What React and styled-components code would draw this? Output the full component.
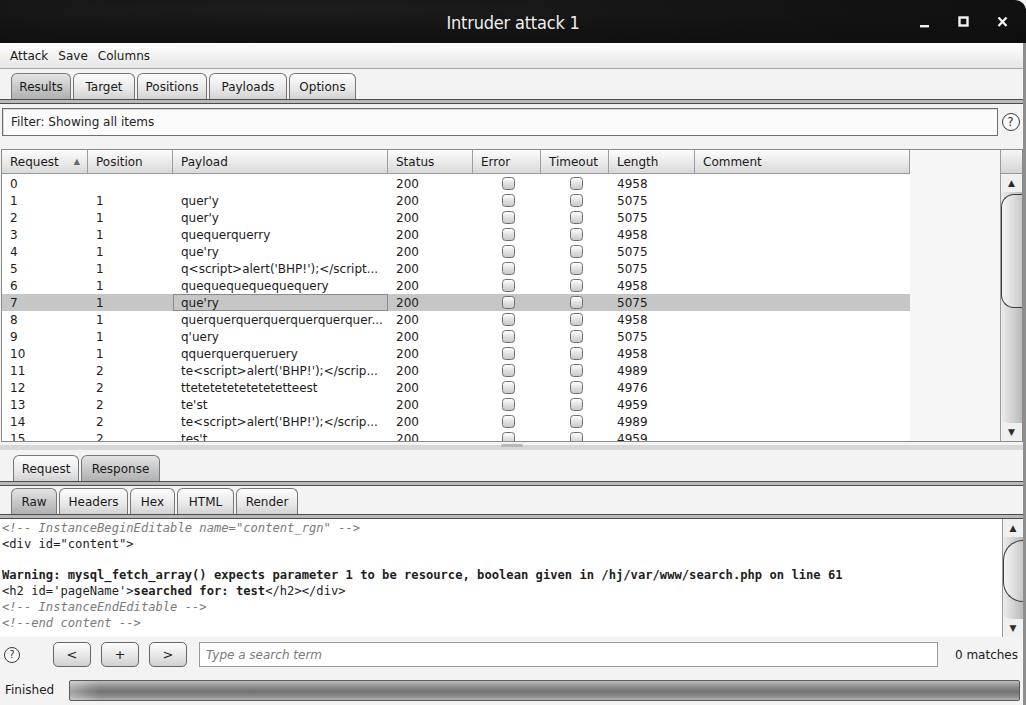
import React from 'react';
import styled, { createGlobalStyle } from 'styled-components';

const Global = createGlobalStyle`
  html, body { margin: 0; padding: 0; background: #f3f3f3; }
  body { font-family: "DejaVu Sans", "Liberation Sans", sans-serif; font-size: 12px; color: #1e1e1e; }
  * { box-sizing: border-box; }
`;

const Window = styled.div`
  width: 1026px;
  height: 705px;
  display: flex;
  flex-direction: column;
  overflow: hidden;
  background: #f3f3f3;
`;

const TitleBar = styled.div`
  height: 43px;
  flex: none;
  display: grid;
  grid-template-columns: 1fr auto 1fr;
  align-items: center;
  background: radial-gradient(ellipse at 30% 20%, #1d1d1d 0%, #121212 55%, #0e0e0e 100%);
  border-top-right-radius: 11px;
  color: #f0f0f0;
`;

const Title = styled.div`
  grid-column: 2;
  font-family: "DejaVu Sans Condensed", "DejaVu Sans", sans-serif;
  font-stretch: condensed;
  font-size: 18px;
  letter-spacing: -0.2px;
  padding-top: 1px;
`;

const Controls = styled.div`
  grid-column: 3;
  justify-self: end;
  display: flex;
  align-items: center;
  gap: 28px;
  padding-right: 18px;
`;

const Body = styled.div`
  flex: 1;
  display: flex;
  flex-direction: column;
  border-right: 3px solid #8e8e8e;
  min-height: 0;
`;

const MenuBar = styled.div`
  height: 26px;
  flex: none;
  display: flex;
  align-items: center;
  gap: 10px;
  padding-left: 10px;
  background: linear-gradient(#fefefe, #e6e6e6);
  border-bottom: 1px solid #a6a6a6;
`;

const MenuItem = styled.span`
  font-size: 12px;
  color: #1a1a1a;
`;

const TabBar = styled.div`
  flex: none;
  display: flex;
  align-items: flex-end;
  gap: 2px;
  padding: ${p => p.$top}px 0 0 ${p => p.$left}px;
`;

const Tab = styled.div`
  height: 26px;
  width: ${p => p.$w}px;
  display: flex;
  align-items: center;
  justify-content: center;
  border: 1px solid #777;
  border-bottom: none;
  border-radius: 6px 6px 0 0;
  background: ${p => (p.$active
    ? 'linear-gradient(#e4e4e4, #c4c4c4 60%, #b0b0b0)'
    : 'linear-gradient(#fdfdfd, #e8e8e8 60%, #d2d2d2)')};
  font-size: 12px;
  color: #1a1a1a;
`;

const Rule = styled.div`
  flex: none;
  height: 5px;
  background: linear-gradient(#4c4c4c 0 1px, #b9b9b9 1px 4px, #4c4c4c 4px);
`;

const FilterRow = styled.div`
  flex: none;
  display: flex;
  align-items: center;
  padding: 4px 0 0 2px;
  margin-bottom: 13px;
`;

const FilterBox = styled.div`
  flex: 1;
  height: 28px;
  display: flex;
  align-items: center;
  padding-left: 8px;
  border: 1px solid #6f6f6f;
  background: #fbfbfb;
  box-shadow: inset 1px 1px 0 #d8d8d8;
`;

const HelpSlot = styled.div`
  width: 25px;
  display: flex;
  justify-content: center;
`;

const Help = styled.span`
  width: ${p => p.$size}px;
  height: ${p => p.$size}px;
  border: 1.3px solid #3b3b3b;
  border-radius: 50%;
  display: flex;
  align-items: center;
  justify-content: center;
  font-size: ${p => p.$size - 6}px;
  line-height: 1;
  color: #333;
  background: #fafafa;
`;

const Table = styled.div`
  flex: none;
  height: 293px;
  margin-left: 1px;
  display: flex;
  border: 1px solid #8a8a8a;
  background: #f6f6f6;
`;

const TableMain = styled.div`
  flex: 1;
  display: flex;
  flex-direction: column;
  min-width: 0;
`;

const HeaderRow = styled.div`
  display: grid;
  grid-template-columns: ${p => p.$cols};
  width: max-content;
  height: 24px;
  flex: none;
`;

const HeaderCell = styled.div`
  display: flex;
  align-items: center;
  justify-content: space-between;
  padding: 0 7px 0 8px;
  background: linear-gradient(#fcfcfc, #e9e9e9 55%, #d9d9d9);
  border-right: 1px solid #9d9d9d;
  border-bottom: 1px solid #9d9d9d;
  font-size: 12px;
  color: #1a1a1a;
`;

const SortArrow = styled.span`
  font-size: 8px;
  color: #666;
`;

const Rows = styled.div`
  flex: 1;
  overflow: hidden;
  padding-top: 1px;
`;

const Row = styled.div`
  display: grid;
  grid-template-columns: ${p => p.$cols};
  width: max-content;
  height: 17px;
  background: ${p => (p.$selected ? '#c6c6c6' : '#ffffff')};
`;

const Cell = styled.div`
  display: flex;
  align-items: center;
  justify-content: ${p => (p.$center ? 'center' : 'flex-start')};
  padding-left: ${p => (p.$center ? 0 : 7)}px;
  white-space: nowrap;
  overflow: hidden;
  font-size: 12px;
  color: #1c1c1c;
  border: 1px solid ${p => (p.$focus ? '#8a8a8a' : 'transparent')};
`;

const Check = styled.span`
  width: 13px;
  height: 13px;
  border: 1px solid #6f6f6f;
  border-radius: 3.5px;
  background: linear-gradient(#fefefe, #e2e2e2 50%, #c9c9c9);
  margin-left: ${p => p.$shift}px;
`;

const Scrollbar = styled.div`
  width: ${p => p.$w}px;
  flex: none;
  display: flex;
  flex-direction: column;
  border-left: 1px solid #9a9a9a;
  background: #f0f0f0;
`;

const ScrollCorner = styled.div`
  height: 24px;
  flex: none;
  background: linear-gradient(#f6f6f6, #d5d5d5);
  border-bottom: 1px solid #9a9a9a;
`;

const ScrollArrow = styled.div`
  height: 18px;
  flex: none;
  display: flex;
  align-items: center;
  justify-content: center;
  font-size: 9px;
  color: #2a2a2a;
`;

const ScrollTrack = styled.div`
  flex: 1;
  display: flex;
  flex-direction: column;
  background: linear-gradient(90deg, #ececec, #cfcfcf 60%, #b9b9b9);
  border-radius: 0 0 0 8px;
`;

const Thumb = styled.div`
  height: ${p => p.$h}px;
  flex: none;
  margin-top: ${p => p.$top}px;
  border: 1.3px solid #3e3e3e;
  border-right: none;
  border-radius: ${p => p.$r}px 0 0 ${p => p.$r}px;
  background: linear-gradient(90deg, #f4f4f4, #dedede 55%, #c6c6c6);
`;

const Divider = styled.div`
  flex: none;
  height: 10px;
  display: flex;
  justify-content: center;
  background: linear-gradient(#f3f3f3 0 3px, #d7d7d7 3px 8px, #f3f3f3 8px);
`;

const Grip = styled.div`
  width: 22px;
  height: 3px;
  margin-top: 2px;
  border-radius: 2px 2px 0 0;
  background: #b8b8b8;
`;

const Editor = styled.div`
  flex: none;
  height: 118px;
  display: flex;
  background: #ffffff;
`;

const Code = styled.div`
  flex: 1;
  padding: 2px 0 0 2px;
  font-family: "DejaVu Sans Mono", "Liberation Mono", monospace;
  font-size: 12.15px;
  line-height: 15.8px;
  white-space: pre;
  overflow: hidden;
  color: #1e1e1e;
`;

const Line = styled.div`
  height: 15.8px;
  font-style: ${p => (p.$comment ? 'italic' : 'normal')};
  font-weight: ${p => (p.$bold ? 'bold' : 'normal')};
  color: ${p => (p.$comment ? '#7a7a7a' : '#1e1e1e')};
`;

const Strong = styled.span`
  font-weight: bold;
`;

const SearchRow = styled.div`
  flex: none;
  height: 35px;
  display: flex;
  align-items: center;
  padding: 0 5px 0 4px;
`;

const NavButton = styled.div`
  width: 38px;
  height: 25px;
  display: flex;
  align-items: center;
  justify-content: center;
  margin-left: ${p => p.$ml}px;
  border: 1px solid #666;
  border-radius: 5px;
  background: linear-gradient(#fdfdfd, #e6e6e6 55%, #d0d0d0);
  font-size: 13px;
  color: #222;
`;

const SearchField = styled.div`
  flex: 1;
  height: 25px;
  margin-left: 12px;
  display: flex;
  align-items: center;
  padding-left: 6px;
  border: 1px solid #9a9a9a;
  background: #fff;
`;

const Placeholder = styled.span`
  font-style: italic;
  color: #7a7a7a;
  font-size: 12px;
`;

const Matches = styled.span`
  margin-left: 17px;
  font-size: 12px;
  color: #1c1c1c;
`;

const StatusBar = styled.div`
  flex: 1;
  display: flex;
  align-items: center;
  padding: 3px 3px 0 5px;
`;

const StatusLabel = styled.span`
  font-size: 12px;
  color: #1c1c1c;
`;

const Progress = styled.div`
  flex: 1;
  height: 21px;
  margin-left: 15px;
  border: 1px solid #5a5a5a;
  border-radius: 2px;
  background:
    linear-gradient(90deg, rgba(255,255,255,0.35), rgba(255,255,255,0) 30px),
    linear-gradient(#bdbdbd, #8d8d8d 30%, #737373 55%, #8a8a8a 80%, #b1b1b1);
`;

const columns = [
  { key: 'req', label: 'Request', w: 86, sort: true },
  { key: 'pos', label: 'Position', w: 85 },
  { key: 'payload', label: 'Payload', w: 215 },
  { key: 'status', label: 'Status', w: 85 },
  { key: 'error', label: 'Error', w: 68 },
  { key: 'timeout', label: 'Timeout', w: 68 },
  { key: 'length', label: 'Length', w: 86 },
  { key: 'comment', label: 'Comment', w: 215 },
];
const GRID = columns.map(c => `${c.w}px`).join(' ');

const rows = [
  ['0', '', '', '4958'],
  ['1', '1', "quer'y", '5075'],
  ['2', '1', "quer'y", '5075'],
  ['3', '1', 'quequerquerry', '4958'],
  ['4', '1', "que'ry", '5075'],
  ['5', '1', "q<script>alert('BHP!');</script...", '5075'],
  ['6', '1', 'quequequequequequery', '4958'],
  ['7', '1', "que'ry", '5075'],
  ['8', '1', 'querquerquerquerquerquerquer...', '4958'],
  ['9', '1', "q'uery", '5075'],
  ['10', '1', 'qquerquerqueruery', '4958'],
  ['11', '2', "te<script>alert('BHP!');</scrip...", '4989'],
  ['12', '2', 'ttetetetetetetetetteest', '4976'],
  ['13', '2', "te'st", '4959'],
  ['14', '2', "te<script>alert('BHP!');</scrip...", '4989'],
  ['15', '2', "tes't", '4959'],
];

const mainTabs = [
  { label: 'Results', w: 60, active: true },
  { label: 'Target', w: 62 },
  { label: 'Positions', w: 70 },
  { label: 'Payloads', w: 78 },
  { label: 'Options', w: 67 },
];
const msgTabs = [
  { label: 'Request', w: 66 },
  { label: 'Response', w: 79, active: true },
];
const viewTabs = [
  { label: 'Raw', w: 46, active: true },
  { label: 'Headers', w: 69 },
  { label: 'Hex', w: 45 },
  { label: 'HTML', w: 57 },
  { label: 'Render', w: 62 },
];

function Tabs({ items, top, left }) {
  return (
    <TabBar $top={top} $left={left}>
      {items.map(t => (
        <Tab key={t.label} $w={t.w} $active={t.active}>{t.label}</Tab>
      ))}
    </TabBar>
  );
}

function WindowControls() {
  return (
    <Controls>
      <svg width="11" height="12" viewBox="0 0 11 12">
        <rect x="1" y="9" width="9" height="2.4" fill="#f2f2f2" />
      </svg>
      <svg width="11" height="12" viewBox="0 0 11 12">
        <rect x="1.5" y="1.5" width="8" height="8" fill="none" stroke="#f2f2f2" strokeWidth="2.4" />
      </svg>
      <svg width="11" height="12" viewBox="0 0 11 12">
        <path d="M1.5 1.5 L9.5 10 M9.5 1.5 L1.5 10" stroke="#f2f2f2" strokeWidth="2.3" />
      </svg>
    </Controls>
  );
}

function Scroll({ w, corner, thumbTop, thumbH, radius }) {
  return (
    <Scrollbar $w={w}>
      {corner && <ScrollCorner />}
      <ScrollArrow>▲</ScrollArrow>
      <ScrollTrack>
        <Thumb $top={thumbTop} $h={thumbH} $r={radius} />
      </ScrollTrack>
      <ScrollArrow>▼</ScrollArrow>
    </Scrollbar>
  );
}

export default function App() {
  return (
    <>
      <Global />
      <Window>
        <TitleBar>
          <Title>Intruder attack 1</Title>
          <WindowControls />
        </TitleBar>
        <Body>
          <MenuBar>
            <MenuItem>Attack</MenuItem>
            <MenuItem>Save</MenuItem>
            <MenuItem>Columns</MenuItem>
          </MenuBar>

          <Tabs items={mainTabs} top={4} left={11} />
          <Rule />

          <FilterRow>
            <FilterBox>Filter: Showing all items</FilterBox>
            <HelpSlot><Help $size={18}>?</Help></HelpSlot>
          </FilterRow>

          <Table>
            <TableMain>
              <HeaderRow $cols={GRID}>
                {columns.map(c => (
                  <HeaderCell key={c.key}>
                    {c.label}
                    {c.sort && <SortArrow>▲</SortArrow>}
                  </HeaderCell>
                ))}
              </HeaderRow>
              <Rows>
                {rows.map(([req, pos, payload, len]) => {
                  const selected = req === '7';
                  return (
                    <Row key={req} $cols={GRID} $selected={selected}>
                      <Cell>{req}</Cell>
                      <Cell>{pos}</Cell>
                      <Cell $focus={selected}>{payload}</Cell>
                      <Cell>200</Cell>
                      <Cell $center><Check $shift={2} /></Cell>
                      <Cell $center><Check $shift={2} /></Cell>
                      <Cell>{len}</Cell>
                      <Cell />
                    </Row>
                  );
                })}
              </Rows>
            </TableMain>
            <Scroll w={22} corner thumbTop={2} thumbH={114} radius={13} />
          </Table>

          <Divider><Grip /></Divider>

          <Tabs items={msgTabs} top={3} left={13} />
          <Rule />
          <Tabs items={viewTabs} top={2} left={11} />
          <Rule />

          <Editor>
            <Code>
              <Line $comment>{'<!-- InstanceBeginEditable name="content_rgn" -->'}</Line>
              <Line>{'<div id="content">'}</Line>
              <Line>{' '}</Line>
              <Line $bold>{'Warning: mysql_fetch_array() expects parameter 1 to be resource, boolean given in /hj/var/www/search.php on line 61'}</Line>
              <Line>{"<h2 id='pageName'>"}<Strong>searched for: test</Strong>{'</h2></div>'}</Line>
              <Line $comment>{'<!-- InstanceEndEditable -->'}</Line>
              <Line $comment>{'<!--end content -->'}</Line>
            </Code>
            <Scroll w={21} thumbTop={3} thumbH={62} radius={22} />
          </Editor>

          <SearchRow>
            <Help $size={16}>?</Help>
            <NavButton $ml={33}>&lt;</NavButton>
            <NavButton $ml={10}>+</NavButton>
            <NavButton $ml={10}>&gt;</NavButton>
            <SearchField><Placeholder>Type a search term</Placeholder></SearchField>
            <Matches>0 matches</Matches>
          </SearchRow>

          <StatusBar>
            <StatusLabel>Finished</StatusLabel>
            <Progress />
          </StatusBar>
        </Body>
      </Window>
    </>
  );
}
